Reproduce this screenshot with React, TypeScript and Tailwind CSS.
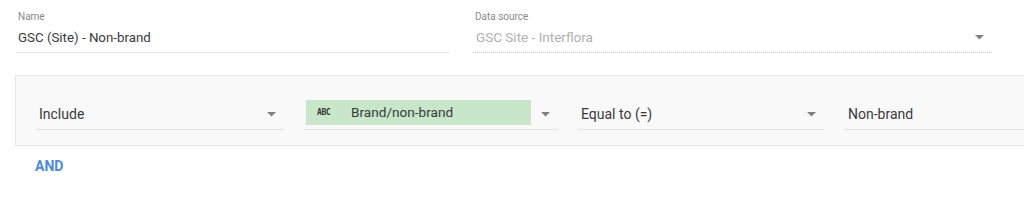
import React from 'react'

function Caret() {
  return (
    <svg width="9" height="5" viewBox="0 0 9 5" className="shrink-0">
      <path d="M0 0h9L4.5 4.5z" fill="#808080" />
    </svg>
  )
}

function SelectField({ value, width }: { value: string; width: string }) {
  return (
    <div className={`${width} h-[30px] flex items-center justify-between pl-[3px] pr-[8px] border-b border-[#e3e3e3] mt-[13px]`}>
      <span className="text-[14px] text-[#3a3a3a]">{value}</span>
      <Caret />
    </div>
  )
}

export default function App() {
  return (
    <div className="w-[1024px] h-[200px] bg-white overflow-hidden" style={{ fontFamily: 'Roboto, "Liberation Sans", sans-serif' }}>
      <div className="flex pl-[16px] pt-[10px] gap-[23px]">
        <div className="w-[434px]">
          <div className="text-[10px] text-[#8a8a8a] pl-[2px] h-[13px] leading-[13px]">Name</div>
          <div className="h-[30px] flex items-center pl-[2px] border-b border-[#e6e6e6] text-[13.3px] text-[#3a3a3a]">
            GSC (Site) - Non-brand
          </div>
        </div>
        <div className="w-[519px]">
          <div className="text-[10px] text-[#8a8a8a] pl-[2px] h-[13px] leading-[13px]">Data source</div>
          <div className="h-[30px] flex items-center justify-between pl-[3px] pr-[8px] border-b border-dotted border-[#c8c8c8]">
            <span className="text-[13.5px] text-[#b0b0b0]">GSC Site - Interflora</span>
            <Caret />
          </div>
        </div>
      </div>

      <div className="ml-[15px] mt-[22px] w-[1030px] h-[71px] border border-[#e6e6e6] bg-[#f9f9f9] flex items-start pl-[20px] gap-[20px] pt-[11px]">
        <SelectField value="Include" width="w-[248px]" />
        <div className="w-[254px] h-[30px] flex items-center justify-between pr-[8px] border-b border-[#e3e3e3] mt-[13px]">
          <div className="w-[225px] h-[25px] self-start ml-[2px] bg-[#c8e6c9] flex items-center pl-[11px]">
            <span className="text-[8px] font-bold text-[#333] w-[34px] tracking-tighter" style={{ fontFamily: '"DejaVu Sans Mono", monospace' }}>ABC</span>
            <span className="text-[13.6px] text-[#3a3a3a]">Brand/non-brand</span>
          </div>
          <Caret />
        </div>
        <SelectField value="Equal to (=)" width="w-[246px]" />
        <div className="w-[200px] h-[30px] flex items-center pl-[4px] border-b border-[#e3e3e3] mt-[13px] text-[14px] text-[#3a3a3a]">
          Non-brand
        </div>
      </div>

      <div className="pl-[35px] pt-[8px]">
        <span className="text-[14px] font-bold text-[#4a89dc]">AND</span>
      </div>
    </div>
  )
}
